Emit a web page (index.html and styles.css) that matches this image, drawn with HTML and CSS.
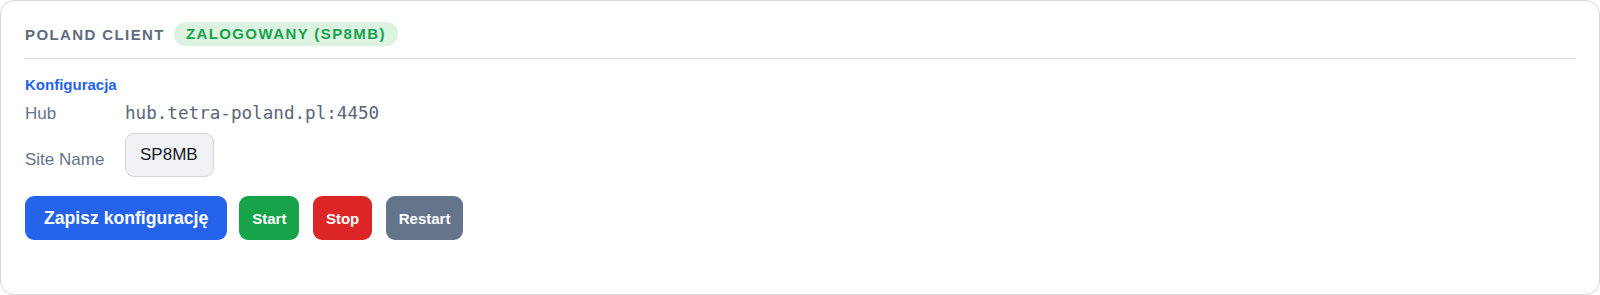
FILE: index.html
```html
<!DOCTYPE html>
<html lang="pl">
<head>
    <meta charset="UTF-8">
    <meta name="viewport" content="width=device-width, initial-scale=1.0">
    <title>Poland Client</title>
    <link rel="stylesheet" href="styles.css">
</head>
<body>
    <div class="card">
        <div class="card-header">
            <span class="title">Poland Client</span>
            <span class="badge">Zalogowany (SP8MB)</span>
        </div>

        <div class="section">
            <div class="section-title">Konfiguracja</div>
            <div class="row">
                <span class="label">Hub</span>
                <span class="value">hub.tetra-poland.pl:4450</span>
            </div>
            <div class="row">
                <span class="label label-input">Site Name</span>
                <input class="field" type="text" value="SP8MB">
            </div>
        </div>

        <div class="actions">
            <button class="btn btn-primary">Zapisz konfigurację</button>
            <div class="controls">
                <button class="btn btn-small green">Start</button>
                <button class="btn btn-small red">Stop</button>
                <button class="btn btn-small slate">Restart</button>
            </div>
        </div>
    </div>
</body>
</html>
```

FILE: styles.css
```css
* {
    box-sizing: border-box;
}

body {
    margin: 0;
    background-color: #fff;
    font-family: "Liberation Sans", Arial, sans-serif;
}

.card {
    height: 100vh;
    border: 1px solid #d5d7e1;
    border-radius: 14px;
    padding: 21px 24px;
    background-color: #fff;
}

.card-header {
    display: flex;
    align-items: center;
    gap: 9px;
    padding-bottom: 12px;
    border-bottom: 1px solid #d9dbe3;
}

.title {
    font-size: 15px;
    font-weight: bold;
    letter-spacing: 1.4px;
    text-transform: uppercase;
    color: #5f6b7e;
}

.badge {
    height: 24px;
    line-height: 24px;
    padding: 0 12px;
    border-radius: 12px;
    background-color: #dcf3e2;
    color: #16a34a;
    font-size: 15px;
    font-weight: bold;
    letter-spacing: 1.4px;
    text-transform: uppercase;
}

.section {
    padding-top: 17px;
}

.section-title {
    font-size: 15px;
    line-height: 18px;
    font-weight: bold;
    color: #2563eb;
    margin-bottom: 8px;
}

.row {
    display: flex;
    align-items: baseline;
    margin-bottom: 7px;
}

.row:last-child {
    align-items: center;
    margin-bottom: 0;
}

.label {
    width: 100px;
    font-size: 17px;
    line-height: 24px;
    color: #64748b;
}

.label-input {
    padding-top: 10px;
}

.value {
    font-family: "DejaVu Sans Mono", monospace;
    font-size: 17.6px;
    color: #5b6577;
}

.field {
    width: 89px;
    height: 44px;
    padding: 0 14px;
    border: 1px solid #d3d6de;
    border-radius: 9px;
    background-color: #f1f2f6;
    color: #111827;
    font-family: "Liberation Sans", Arial, sans-serif;
    font-size: 17px;
}

.actions {
    display: flex;
    align-items: center;
    gap: 12px;
    margin-top: 19px;
}

.controls {
    display: flex;
    gap: 13.5px;
}

.btn {
    height: 44px;
    border: none;
    border-radius: 9px;
    color: #fff;
    font-family: "Liberation Sans", Arial, sans-serif;
    font-weight: bold;
    cursor: pointer;
}

.btn-primary {
    padding: 0 19px;
    font-size: 17.6px;
    background-color: #2563eb;
}

.btn-small {
    padding: 0 13px;
    font-size: 15px;
}

.green {
    background-color: #16a34a;
}

.red {
    background-color: #dc2626;
}

.slate {
    background-color: #64748b;
}
```
